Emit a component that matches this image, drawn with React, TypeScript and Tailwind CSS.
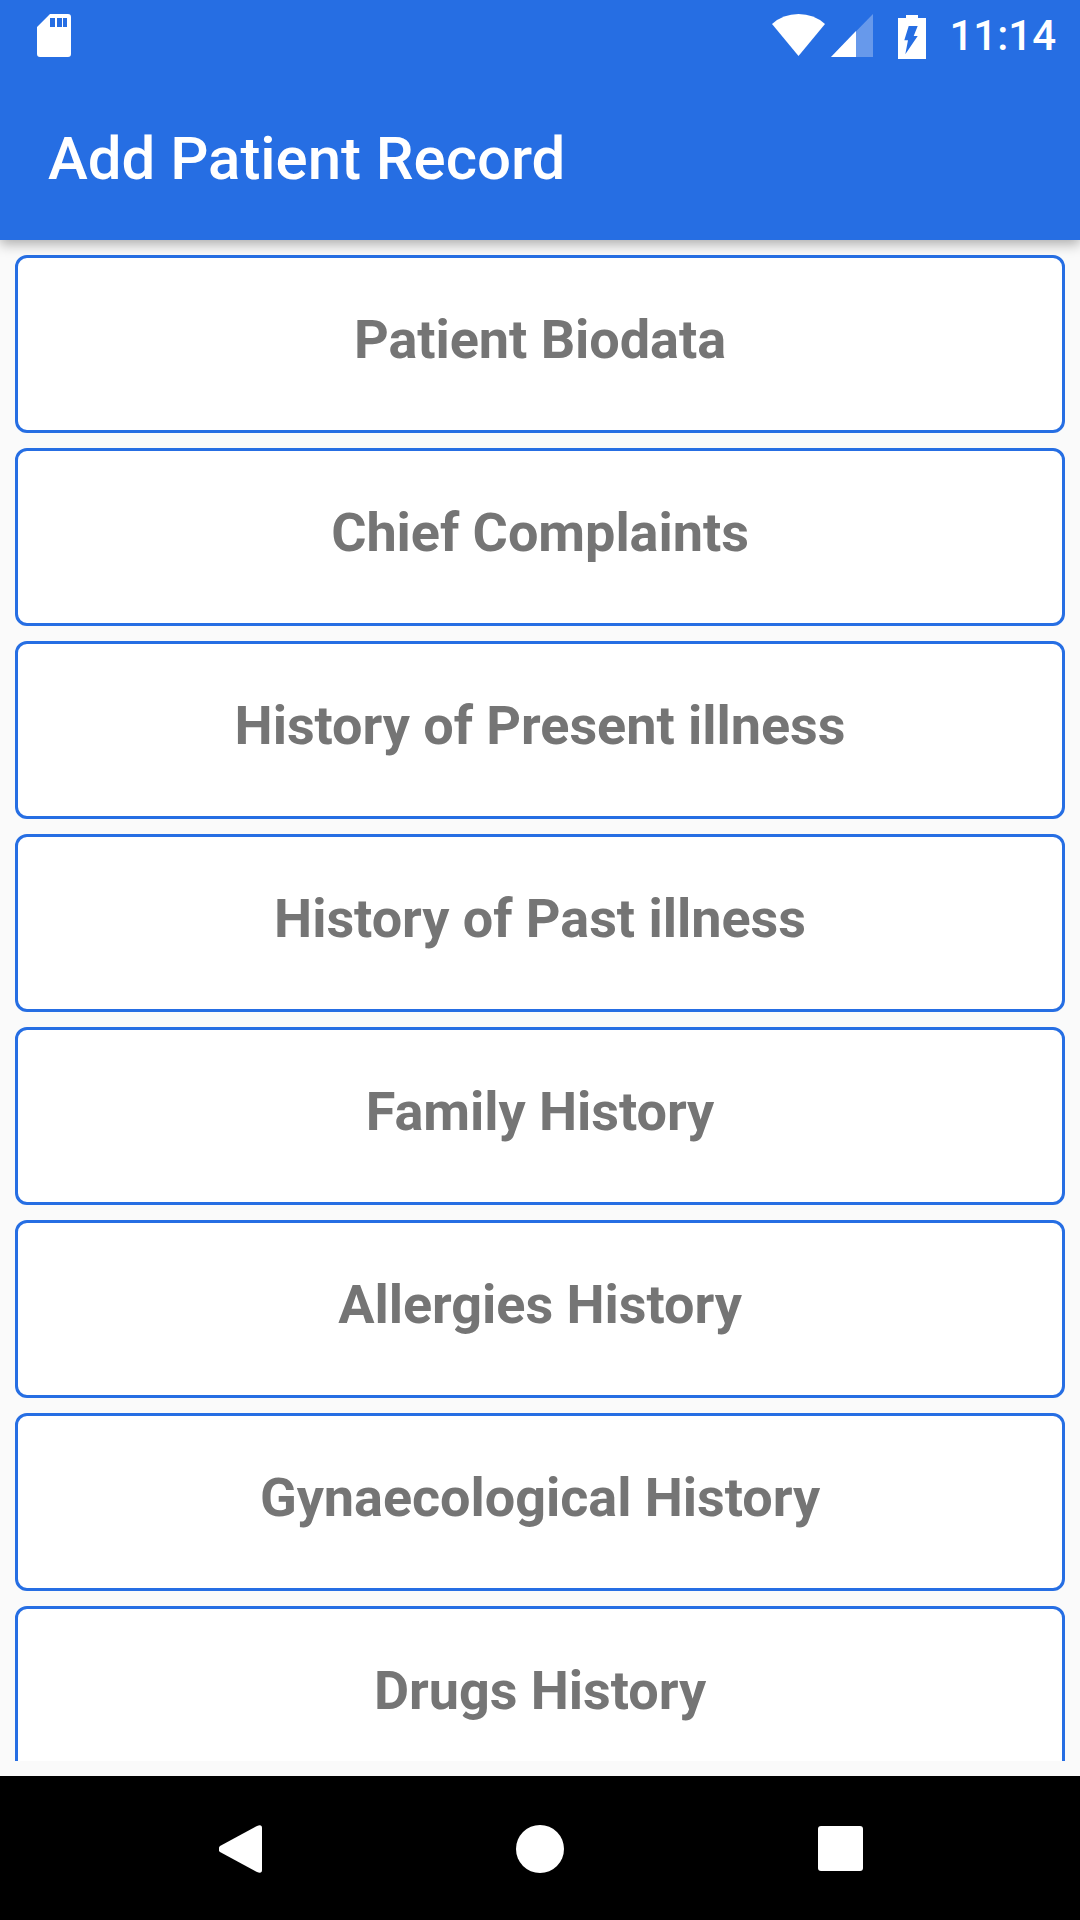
const items = [
  "Patient Biodata",
  "Chief Complaints",
  "History of Present illness",
  "History of Past illness",
  "Family History",
  "Allergies History",
  "Gynaecological History",
  "Drugs History",
];

export default function App() {
  return (
    <div className="flex h-[1920px] w-[1080px] flex-col overflow-hidden bg-[#fafafa] font-['Roboto',sans-serif]">
      <header className="relative z-10 h-[240px] shrink-0 bg-[#266ee3] shadow-[0_4px_12px_rgba(0,0,0,0.32)]">
        <div className="flex h-[72px] items-center pl-[37px] pr-[24px] text-white">
          <svg width="34" height="43" viewBox="0 0 34 43" className="mt-[-1px]">
            <path
              fillRule="evenodd"
              fill="#fff"
              d="M13 0H31a3 3 0 0 1 3 3V40a3 3 0 0 1-3 3H3a3 3 0 0 1-3-3V13ZM13 4V13H18V4ZM20 4V13H25V4ZM26 4V13H30V4Z"
            />
          </svg>
          <div className="flex-1" />
          <svg width="53" height="42" viewBox="0 0 53 42" className="mt-[-2px]">
            <path fill="#fff" d="M26.5 42L0 10Q11 0 26.5 0T53 10Z" />
          </svg>
          <svg width="42" height="43" viewBox="0 0 42 43" className="ml-[6px] mt-[-1px]">
            <path fill="#fff" fillOpacity="0.3" d="M42 0V43H0Z" />
            <path fill="#fff" d="M25 17V43H0Z" />
          </svg>
          <svg width="28" height="44" viewBox="0 0 28 44" className="ml-[25px] mt-[1px]">
            <path
              fillRule="evenodd"
              fill="#fff"
              d="M8 0H20V3H28V44H0V3H8ZM10.7 11L6.3 25.3H10L7.3 39.3L19.7 21H15.7L19.7 11Z"
            />
          </svg>
          <span className="ml-[23px] text-[42px] font-medium leading-none">11:14</span>
        </div>
        <div className="flex h-[168px] items-center pl-[48px] pt-[5px]">
          <h1 className="text-[60px] font-medium leading-none tracking-[-0.04px] text-white">Add Patient Record</h1>
        </div>
      </header>
      <main className="mb-[15px] flex min-h-0 flex-1 flex-col gap-[15px] overflow-hidden px-[15px] pt-[15px]">
        {items.map((t) => (
          <button
            key={t}
            className="flex h-[178px] w-full shrink-0 items-start justify-center rounded-[12px] border-[3px] border-[#266ee3] bg-white pt-[50px]"
          >
            <span className="text-[54px] font-bold leading-[64px] tracking-[-0.05px] text-[#757575]">{t}</span>
          </button>
        ))}
      </main>
      <nav className="flex h-[144px] shrink-0 items-center bg-black pl-[219px] pt-[1px]">
        <svg width="43" height="48" viewBox="0 0 43 48">
          <path fill="#fff" d="M1 21L38 1Q43-1 43 3V45Q43 49 38 47L1 27Q-2 24 1 21Z" />
        </svg>
        <div className="ml-[254px] h-[48px] w-[48px] rounded-full bg-white" />
        <div className="ml-[254px] h-[45px] w-[45px] rounded-[3px] bg-white" />
      </nav>
    </div>
  );
}
